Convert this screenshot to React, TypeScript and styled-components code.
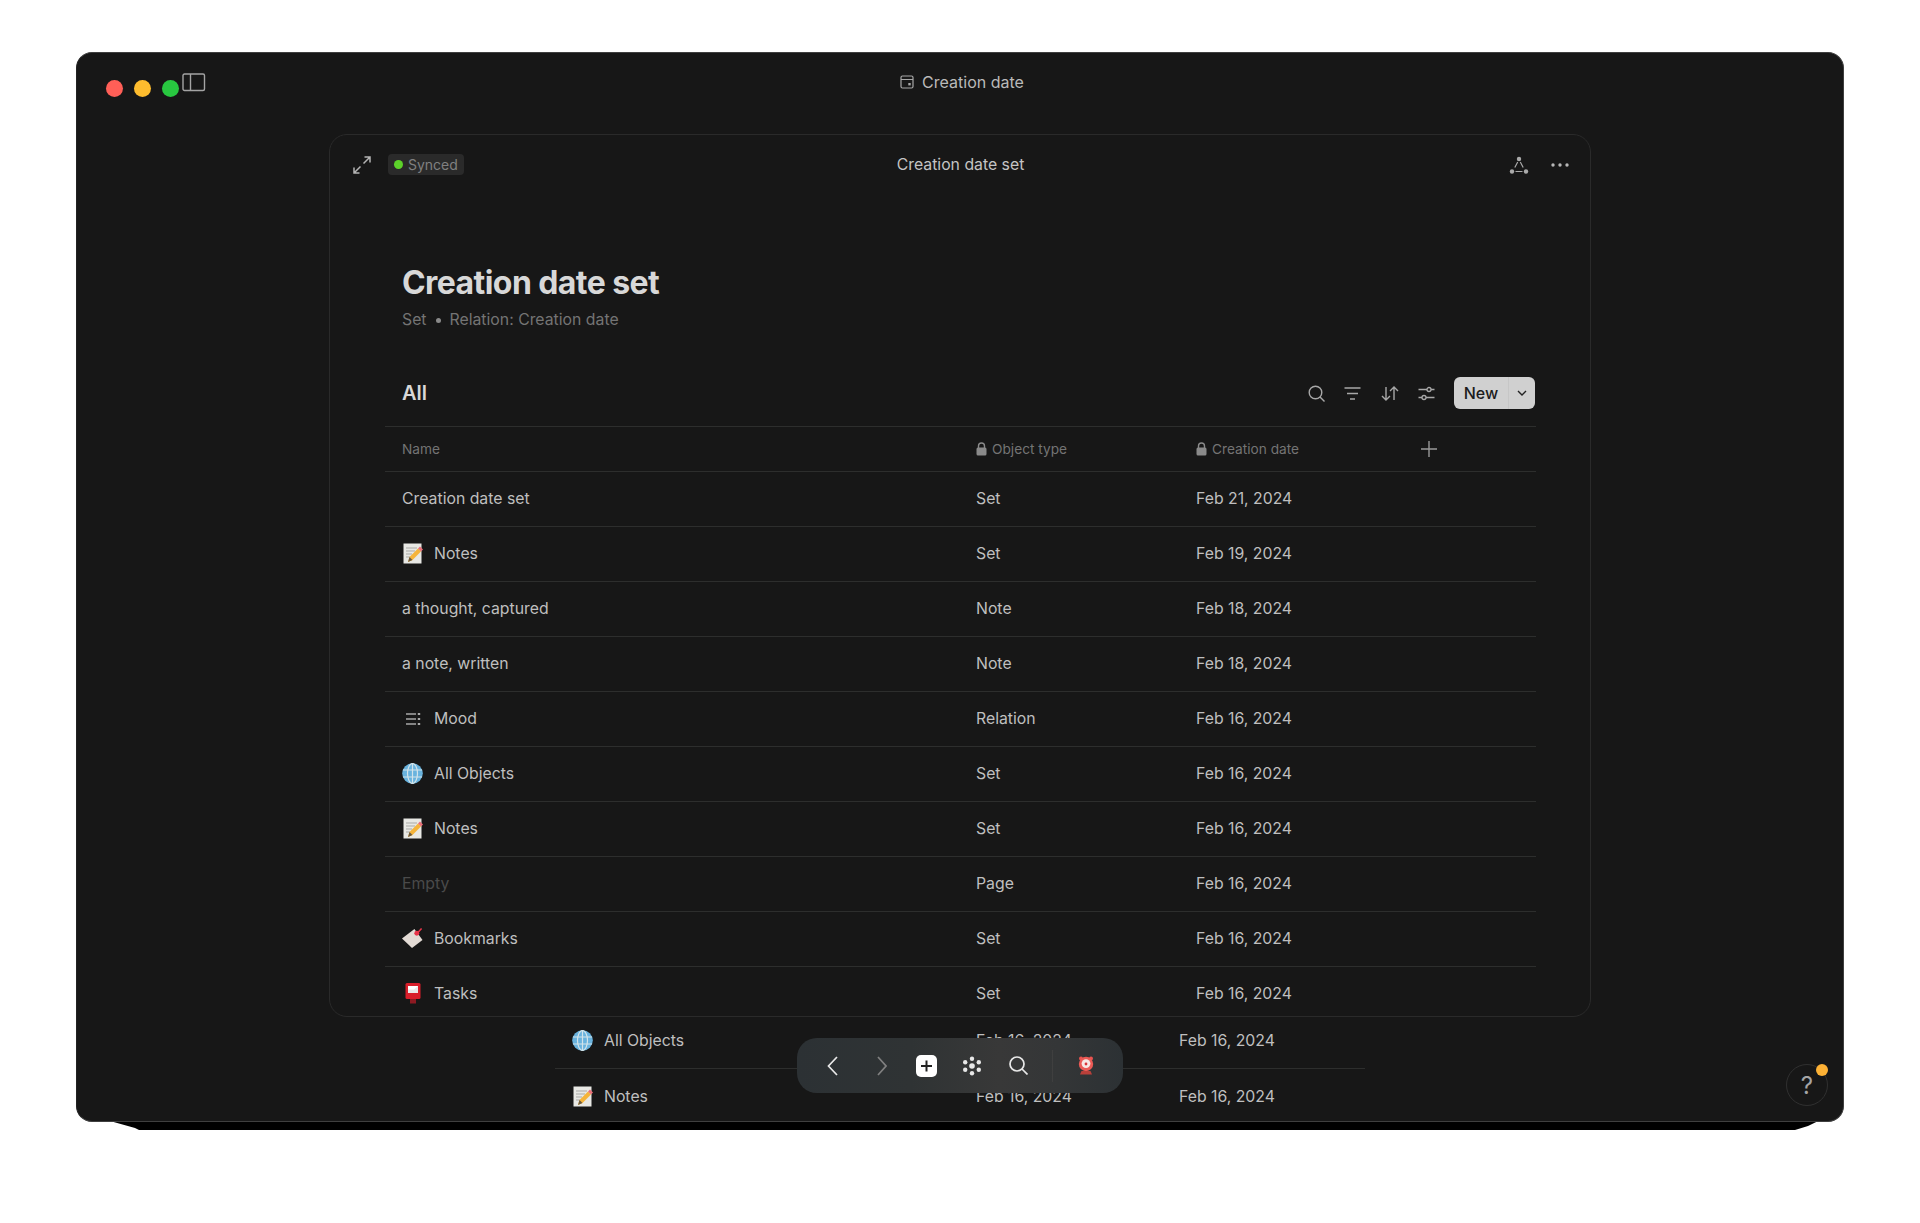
import React from "react";
import styled, { createGlobalStyle } from "styled-components";

const Global = createGlobalStyle`
  html { background: #fff; }
  body { margin: 0; padding: 0; font-family: Inter, "Liberation Sans", sans-serif; -webkit-font-smoothing: antialiased; }
`;

const Page = styled.div`
  width: 1920px;
  height: 1223px;
  padding: 52px 0 0 76px;
  box-sizing: border-box;
  overflow: hidden;
`;

const Win = styled.div`
  position: relative;
  width: 1768px;
  height: 1070px;
  box-sizing: border-box;
  background: #171717;
  border: 1px solid #3f3f3f;
  border-left-color: #222;
  border-radius: 16px;
  display: flex;
  flex-direction: column;
  align-items: center;

  &::before {
    content: "";
    position: absolute;
    left: 0;
    bottom: -9px;
    width: 1766px;
    height: 30px;
    z-index: -1;
    background: #000;
    clip-path: polygon(33px 0, 1766px 0, 1766px 9px, 1731px 26px, 1718px 30px, 62px 30px, 58px 28px, 33px 21px);
  }
`;

const Clip = styled.div`
  width: 100%;
  height: 100%;
  border-radius: 15px;
  overflow: hidden;
  display: flex;
  flex-direction: column;
  align-items: flex-start;
`;

const TitleBar = styled.div`
  position: relative;
  width: 100%;
  height: 81px;
  flex: none;
  display: flex;
  align-items: flex-start;
  justify-content: center;
  padding: 19px 0 0 4px;
  box-sizing: border-box;
  gap: 8px;
`;

const Lights = styled.div`
  position: absolute;
  left: 29px;
  top: 20px;
  display: flex;
  align-items: flex-start;
  gap: 11px;
`;

const Light = styled.span<{ $c: string }>`
  width: 17px;
  height: 17px;
  margin-top: 7px;
  border-radius: 50%;
  background: ${(p) => p.$c};
`;

const SideToggle = styled.svg`
  display: block;
  margin-left: -8px;
`;

const WinTitle = styled.span`
  font-size: 16px;
  line-height: 20px;
  color: #bababa;
`;

const Card = styled.div`
  width: 1262px;
  height: 883px;
  flex: none;
  margin-left: 252px;
  box-sizing: border-box;
  border: 1px solid #2a2a2a;
  border-radius: 18px;
  overflow: hidden;
  display: flex;
  flex-direction: column;
`;

const CardHead = styled.div`
  display: grid;
  grid-template-columns: 1fr auto 1fr;
  align-items: center;
  height: 60px;
  box-sizing: border-box;
  padding: 0 22px 1px 23px;
  flex: none;
`;

const HeadLeft = styled.div`
  display: flex;
  align-items: center;
  gap: 17px;
`;

const HeadRight = styled.div`
  display: flex;
  align-items: center;
  justify-content: flex-end;
  gap: 22px;
  margin-right: -1px;
`;

const Badge = styled.div`
  display: flex;
  align-items: center;
  gap: 5px;
  height: 21px;
  padding: 0 6px;
  background: #2a2a2a;
  border-radius: 4px;
  font-size: 14px;
  color: #808080;
`;

const Dot = styled.span`
  width: 9px;
  height: 9px;
  border-radius: 50%;
  background: #5cd22a;
`;

const CardTitle = styled.span`
  font-size: 15.8px;
  color: #c4c4c4;
`;

const Body = styled.div`
  padding: 0 54px 0 55px;
  display: flex;
  flex-direction: column;
`;

const H1 = styled.h1`
  margin: 68px 0 0 17px;
  font-size: 32px;
  line-height: 40px;
  font-weight: 700;
  letter-spacing: -0.57px;
  color: #d8d8d8;
`;

const Sub = styled.div`
  margin: 7px 0 0 17px;
  display: flex;
  align-items: center;
  gap: 9px;
  font-size: 15.8px;
  line-height: 20px;
  color: #747474;
`;

const Bullet = styled.span`
  width: 5px;
  height: 5px;
  border-radius: 50%;
  background: #8a8a8a;
`;

const ViewBar = styled.div`
  margin-top: 47px;
  height: 32px;
  display: flex;
  align-items: center;
  padding: 0 1px 0 17px;
`;

const ViewName = styled.span`
  font-size: 20px;
  font-weight: 600;
  color: #d8d8d8;
  flex: 1;
`;

const Tools = styled.div`
  display: flex;
  align-items: center;
  gap: 19.5px;
  margin-right: 19px;
`;

const NewBtn = styled.div`
  width: 81px;
  height: 32px;
  display: flex;
  align-items: stretch;
  background: #d0d0d0;
  border-radius: 6px;
  color: #1c1c1c;
  font-size: 16px;
  font-weight: 500;
`;

const NewLabel = styled.span`
  width: 54px;
  display: flex;
  align-items: center;
  justify-content: center;
  border-right: 1px solid #c6c6c6;
`;

const NewArrow = styled.span`
  flex: 1;
  display: flex;
  align-items: center;
  justify-content: center;
`;

const Row = styled.div<{ $head?: boolean }>`
  display: grid;
  grid-template-columns: 574px 220px 224px 1fr;
  align-items: center;
  box-sizing: border-box;
  height: ${(p) => (p.$head ? 45 : 55)}px;
  margin-top: ${(p) => (p.$head ? 17 : 0)}px;
  padding: 0 0 1px 17px;
  border-top: 1px solid #2d2e2d;
  font-size: 15.8px;
  color: #bfbfbf;
`;

const HeadCell = styled.div`
  display: flex;
  align-items: center;
  gap: 5px;
  font-size: 13.7px;
  color: #747474;
`;

const NameCell = styled.div<{ $empty?: boolean }>`
  display: flex;
  align-items: center;
  gap: 11px;
  color: ${(p) => (p.$empty ? "#4a4a4a" : "#bfbfbf")};
`;

const IconBox = styled.span`
  width: 21px;
  height: 21px;
  display: flex;
  align-items: center;
  justify-content: center;
  flex: none;
`;

const Under = styled.div`
  margin-left: 478px;
  width: 810px;
  flex: none;
`;

const UnderRow = styled.div<{ $first?: boolean }>`
  display: grid;
  grid-template-columns: 404px 203px 1fr;
  align-items: center;
  height: ${(p) => (p.$first ? 52 : 55)}px;
  padding: 0 0 ${(p) => (p.$first ? 5 : 0)}px 17px;
  box-sizing: border-box;
  font-size: 15.8px;
  color: #bfbfbf;
  border-bottom: ${(p) => (p.$first ? "1px solid #2d2e2d" : "none")};
`;

const Dock = styled.div`
  position: absolute;
  left: 720px;
  top: 985px;
  width: 326px;
  height: 55px;
  border-radius: 20px;
  display: flex;
  align-items: center;
  background: linear-gradient(90deg, #2c3134 0%, #2f3334 35%, #383838 62%, #343637 80%, #2c3134 100%);
  padding-left: 30px;
  box-sizing: border-box;
`;

const DockIcon = styled.svg<{ $ml?: number }>`
  display: block;
  flex: none;
  margin-left: ${(p) => p.$ml ?? 0}px;
`;

const DockSep = styled.span`
  width: 1px;
  height: 32px;
  background: #3f3f3f;
  margin-left: 24px;
`;

const Help = styled.div`
  position: absolute;
  right: 15px;
  bottom: 15px;
  width: 42px;
  height: 42px;
  box-sizing: border-box;
  border: 1px solid #303030;
  border-radius: 50%;
  display: flex;
  align-items: center;
  justify-content: center;
  font-size: 24px;
  color: #a5a5a5;
`;

const HelpDot = styled.span`
  position: absolute;
  right: -1px;
  top: -1px;
  width: 12px;
  height: 12px;
  border-radius: 50%;
  background: #fdb135;
`;

const I = "#a8a8a8";

const Memo = () => (
  <svg width="20" height="21" viewBox="0 0 20 21">
    <rect x="0.5" y="0.5" width="18" height="20" fill="#e8e8e4" />
    <path d="M3 5h11M3 8h9M3 11h6M3 14h4" stroke="#a9a9a6" strokeWidth="1" />
    <path d="M5 19l1.5-5L15 5.5l3 3L9.5 17z" fill="#f5b43a" />
    <path d="M15 5.5l2-2 3 3-2 2z" fill="#e9707a" />
    <path d="M5 19l1.5-5 3 3z" fill="#6b5a3f" />
  </svg>
);

const Globe = () => (
  <svg width="21" height="21" viewBox="0 0 21 21">
    <circle cx="10.5" cy="10.5" r="10.3" fill="#69b3de" />
    <g fill="none" stroke="#d2e3ea" strokeWidth="1.2">
      <ellipse cx="10.5" cy="10.5" rx="5" ry="10" />
      <path d="M10.5 0.5v20M1 7h19M1 14h19" />
    </g>
  </svg>
);

const Tag = () => (
  <svg width="22" height="21" viewBox="0 0 22 21">
    <path d="M0 10.5L13 0.5l8.5 11.5-11 8.5z" fill="#e3dbd5" />
    <circle cx="15.5" cy="5" r="2.6" fill="#e8354a" />
    <path d="M16 5l4.5-5" stroke="#e8354a" strokeWidth="1.6" />
  </svg>
);

const Postbox = () => (
  <svg width="16" height="21" viewBox="0 0 16 21">
    <rect x="0.5" y="0" width="15" height="16" rx="1.5" fill="#d81e2a" />
    <path d="M3 3h10v7H3z" fill="#e9e9e9" />
    <path d="M3 3h10L9 6.5H3z" fill="#fff" />
    <rect x="5" y="16" width="6" height="4.5" fill="#8d1a22" />
  </svg>
);

const Lines = () => (
  <svg width="16" height="14" viewBox="0 0 16 14" fill="none" stroke={I} strokeWidth="1.4">
    <path d="M1 2h10M1 7h10M1 12h10" />
    <path d="M14 1v2M14 6v2M14 11v2" strokeWidth="2.4" />
  </svg>
);

const Lock = () => (
  <svg width="11" height="14" viewBox="0 0 11 14">
    <path d="M2.5 6V4a3 3 0 0 1 6 0v2" fill="none" stroke="#8a8a8a" strokeWidth="1.4" />
    <rect x="0.5" y="5.5" width="10" height="8" rx="1.5" fill="#8a8a8a" />
  </svg>
);

const rows: [string, React.ReactNode, string, string, boolean?][] = [
  ["Creation date set", null, "Set", "Feb 21, 2024"],
  ["Notes", <Memo />, "Set", "Feb 19, 2024"],
  ["a thought, captured", null, "Note", "Feb 18, 2024"],
  ["a note, written", null, "Note", "Feb 18, 2024"],
  ["Mood", <Lines />, "Relation", "Feb 16, 2024"],
  ["All Objects", <Globe />, "Set", "Feb 16, 2024"],
  ["Notes", <Memo />, "Set", "Feb 16, 2024"],
  ["Empty", null, "Page", "Feb 16, 2024", true],
  ["Bookmarks", <Tag />, "Set", "Feb 16, 2024"],
  ["Tasks", <Postbox />, "Set", "Feb 16, 2024"],
];

export default function App() {
  return (
    <Page>
      <Global />
      <Win>
        <Clip>
          <TitleBar>
            <Lights>
              <Light $c="#ff5f57" />
              <Light $c="#febc2e" />
              <Light $c="#28c840" />
              <SideToggle width="24" height="20" viewBox="0 0 24 20" fill="none" stroke="#a4a4a4" strokeWidth="1.4">
                <rect x="1" y="1" width="21.5" height="16.5" rx="1.5" />
                <path d="M8.5 1V17.5" />
              </SideToggle>
            </Lights>
            <svg width="14" height="20" viewBox="0 0 14 20" fill="none" stroke="#a8a8a8" strokeWidth="1.2">
              <rect x="1" y="4" width="12" height="12" rx="1.5" />
              <path d="M1 7.5h12" />
              <rect x="8.3" y="11" width="2.4" height="2.4" fill="#a8a8a8" stroke="none" />
            </svg>
            <WinTitle>Creation date</WinTitle>
          </TitleBar>
          <Card>
            <CardHead>
              <HeadLeft>
                <svg width="18" height="18" viewBox="0 0 18 18" fill="none" stroke="#b4b4b4" strokeWidth="1.5">
                  <path d="M10.5 7.5L17 1M11.5 1H17v5.5M7.5 10.5L1 17M1 11.5V17h5.5" />
                </svg>
                <Badge>
                  <Dot />
                  Synced
                </Badge>
              </HeadLeft>
              <CardTitle>Creation date set</CardTitle>
              <HeadRight>
                <svg width="20" height="18" viewBox="0 0 20 18" fill="none" stroke="#aaa" strokeWidth="1.2">
                  <path d="M8.7 6L5.8 11.5M11.3 6l2.9 5.5M6.5 15.5h7" />
                  <circle cx="10" cy="3" r="2.2" fill="#aaa" stroke="none" />
                  <circle cx="3" cy="15.5" r="2.2" fill="#aaa" stroke="none" />
                  <circle cx="17" cy="15.5" r="2.2" fill="#aaa" stroke="none" />
                </svg>
                <svg width="18" height="4" viewBox="0 0 18 4" fill="#b8b8b8">
                  <circle cx="2" cy="2" r="1.7" />
                  <circle cx="9" cy="2" r="1.7" />
                  <circle cx="16" cy="2" r="1.7" />
                </svg>
              </HeadRight>
            </CardHead>
            <Body>
              <H1>Creation date set</H1>
              <Sub>
                Set
                <Bullet />
                Relation: Creation date
              </Sub>
              <ViewBar>
                <ViewName>All</ViewName>
                <Tools>
                  <svg width="17" height="17" viewBox="0 0 17 17" fill="none" stroke="#a8a8a8" strokeWidth="1.4">
                    <circle cx="7.5" cy="7.5" r="6.3" />
                    <path d="M12 12l4.5 4.5" />
                  </svg>
                  <svg width="17" height="13" viewBox="0 0 17 13" fill="none" stroke="#a8a8a8" strokeWidth="1.4">
                    <path d="M0.5 1h16M3 6.5h11M6 12h5" />
                  </svg>
                  <svg width="18" height="15" viewBox="0 0 18 15" fill="none" stroke="#a8a8a8" strokeWidth="1.4">
                    <path d="M5 1v13M1 10l4 4 4-4M13 14V1M9 5l4-4 4 4" />
                  </svg>
                  <svg width="17" height="15" viewBox="0 0 17 15" fill="none" stroke="#a8a8a8" strokeWidth="1.3">
                    <path d="M0.5 3.5h8.5M13 3.5h3.5M0.5 11.5h3.5M8 11.5h8.5" />
                    <circle cx="11" cy="3.5" r="2" />
                    <circle cx="6" cy="11.5" r="2" />
                  </svg>
                </Tools>
                <NewBtn>
                  <NewLabel>New</NewLabel>
                  <NewArrow>
                    <svg width="10" height="6" viewBox="0 0 10 6" fill="none" stroke="#222" strokeWidth="1.4">
                      <path d="M1 1l4 4 4-4" />
                    </svg>
                  </NewArrow>
                </NewBtn>
              </ViewBar>
              <Row $head>
                <HeadCell>Name</HeadCell>
                <HeadCell>
                  <Lock />
                  Object type
                </HeadCell>
                <HeadCell>
                  <Lock />
                  Creation date
                </HeadCell>
                <svg width="18" height="18" viewBox="0 0 18 18" stroke="#9a9a9a" strokeWidth="1.4">
                  <path d="M9 1v16M1 9h16" />
                </svg>
              </Row>
              {rows.map(([name, icon, type, date, empty], i) => (
                <Row key={i}>
                  <NameCell $empty={empty}>
                    {icon && <IconBox>{icon}</IconBox>}
                    {name}
                  </NameCell>
                  <div>{type}</div>
                  <div>{date}</div>
                </Row>
              ))}
            </Body>
          </Card>
          <Under>
            <UnderRow $first>
              <NameCell>
                <IconBox>
                  <Globe />
                </IconBox>
                All Objects
              </NameCell>
              <div>Feb 16, 2024</div>
              <div>Feb 16, 2024</div>
            </UnderRow>
            <UnderRow>
              <NameCell>
                <IconBox>
                  <Memo />
                </IconBox>
                Notes
              </NameCell>
              <div>Feb 16, 2024</div>
              <div>Feb 16, 2024</div>
            </UnderRow>
          </Under>
        </Clip>
        <Dock>
          <DockIcon width="11" height="20" viewBox="0 0 11 20" fill="none" stroke="#e8e8e8" strokeWidth="1.7">
            <path d="M10 1L1.5 10l8.5 9" />
          </DockIcon>
          <DockIcon $ml={39} width="10" height="20" viewBox="0 0 10 20" fill="none" stroke="#808080" strokeWidth="1.7">
            <path d="M1 1l8 9-8 9" />
          </DockIcon>
          <DockIcon $ml={29} width="21" height="22" viewBox="0 0 21 22">
            <rect width="21" height="22" rx="5" fill="#fff" />
            <path d="M10.5 5.5v11M5 11h11" stroke="#222" strokeWidth="2" />
          </DockIcon>
          <DockIcon $ml={26} width="18" height="20" viewBox="0 0 18 20" fill="#e8e8e8">
            <circle cx="9" cy="10" r="2.8" />
            <circle cx="9" cy="2.7" r="2.2" />
            <circle cx="9" cy="17.3" r="2.2" />
            <circle cx="2.2" cy="6.3" r="2.2" />
            <circle cx="2.2" cy="13.7" r="2.2" />
            <circle cx="15.8" cy="6.3" r="2.2" />
            <circle cx="15.8" cy="13.7" r="2.2" />
          </DockIcon>
          <DockIcon $ml={28} width="19" height="19" viewBox="0 0 19 19" fill="none" stroke="#e8e8e8" strokeWidth="1.7">
            <circle cx="8" cy="8" r="7" />
            <path d="M13 13l5.5 5.5" />
          </DockIcon>
          <DockSep />
          <DockIcon $ml={25} width="16" height="19" viewBox="0 0 16 19">
            <circle cx="3" cy="2.4" r="2" fill="#e9534f" />
            <circle cx="13" cy="2.4" r="2" fill="#e9534f" />
            <circle cx="8" cy="8" r="7.2" fill="#ea5a55" />
            <circle cx="8" cy="7.6" r="4.4" fill="#f7e7e4" />
            <circle cx="8" cy="8" r="1.4" fill="#d8343a" />
            <path d="M3.5 15h9l1.5 3.5H2z" fill="#b9403a" />
          </DockIcon>
        </Dock>
        <Help>
          ?
          <HelpDot />
        </Help>
      </Win>
    </Page>
  );
}
